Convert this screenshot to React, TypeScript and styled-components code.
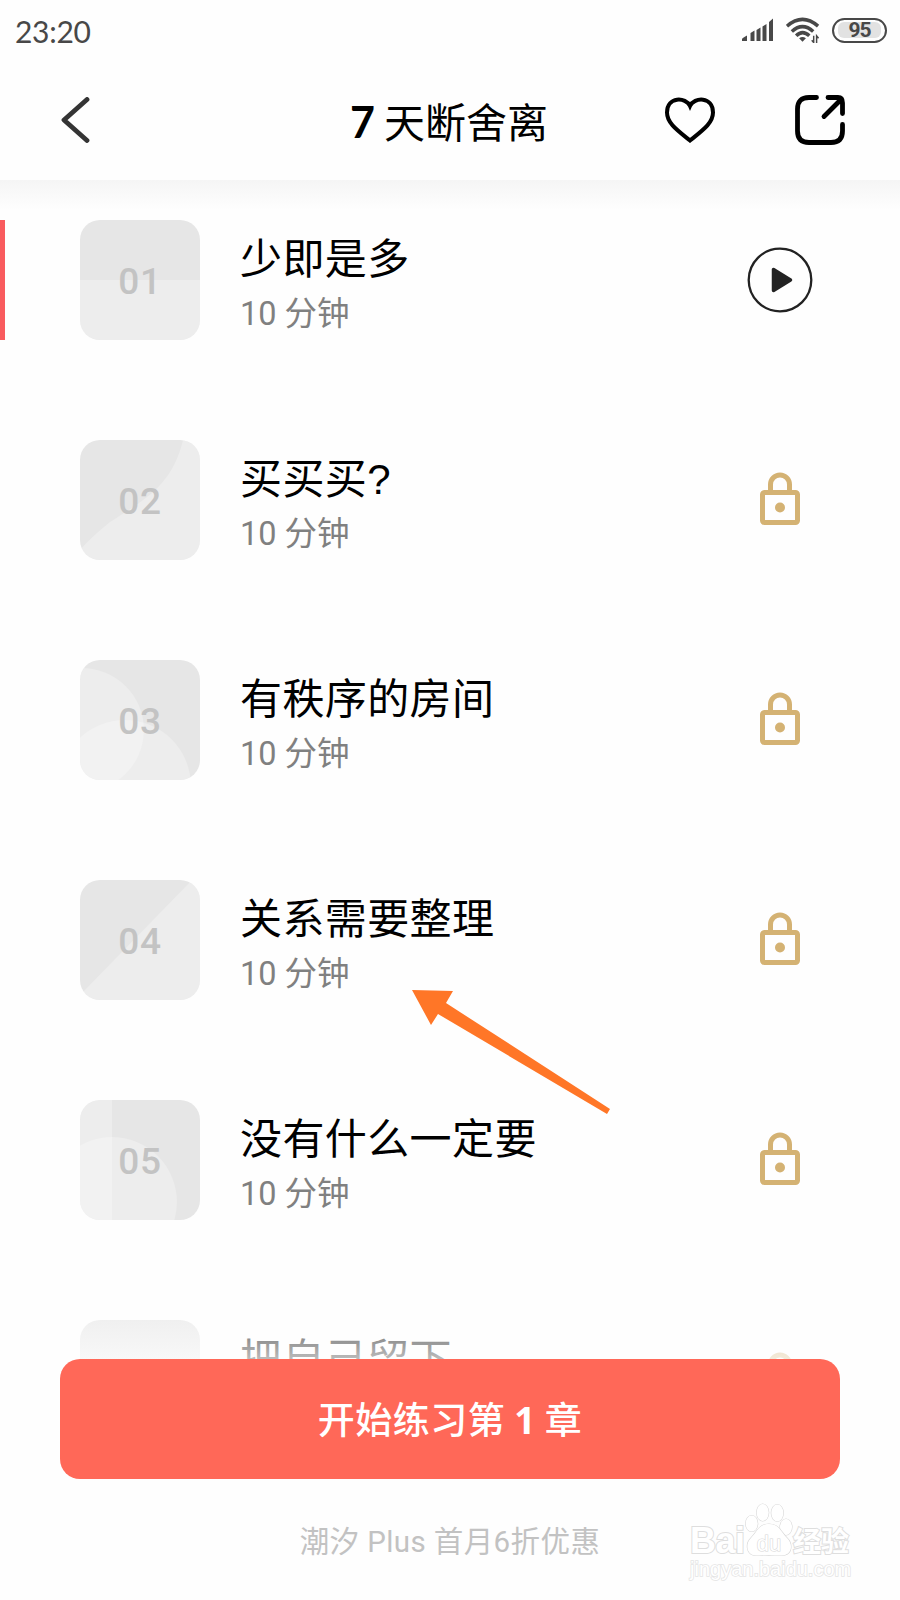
import React from 'react';
import styled, { createGlobalStyle } from 'styled-components';

const GlobalStyle = createGlobalStyle`
  * { box-sizing: border-box; }
  body { margin: 0; background: #fefefe; font-family: Roboto, "Noto Sans CJK SC", sans-serif; }
`;

const Screen = styled.div`
  position: relative;
  width: 900px;
  height: 1600px;
  overflow: hidden;
  background: #fefefe;
`;

const StatusBar = styled.div`
  display: flex;
  align-items: center;
  justify-content: space-between;
  height: 60px;
  padding: 0 13px 0 15px;
  color: #484848;
`;

const Clock = styled.span`
  padding-top: 1px;
  font: 400 30px/36px Lato, sans-serif;
  letter-spacing: -0.3px;
`;

const StatusIcons = styled.div`
  display: flex;
  align-items: center;
  gap: 12px;
`;

const Battery = styled.div`
  display: flex;
  align-items: center;
  justify-content: center;
  width: 55px;
  height: 25px;
  border: 2px solid #484848;
  border-radius: 13px;
  padding: 2px 3px;
`;

const BatteryLevel = styled.span`
  width: 43px;
  height: 16px;
  border-radius: 6px;
  background: #e2e2e2;
  text-align: center;
  font: 700 21px/17px Roboto, sans-serif;
  letter-spacing: -1px;
`;

const Header = styled.header`
  display: grid;
  grid-template-columns: 1fr auto 1fr;
  align-items: center;
  height: 120px;
  padding: 0 55px 0 61px;
`;

const Title = styled.h1`
  margin: 2px 4px 0 -4px;
  display: flex;
  gap: 9px;
  font: 400 41px/60px "Noto Sans CJK SC", sans-serif;
  color: #000;
`;

const TitleNumber = styled.span`
  padding-top: 2px;
  font-family: Lato, sans-serif;
  font-weight: 700;
  font-size: 43px;
`;

const HeaderActions = styled.div`
  display: flex;
  justify-content: flex-end;
  align-items: center;
  gap: 80px;
`;

const Chapters = styled.ul`
  margin: 0;
  padding: 40px 0 0;
  list-style: none;
  display: flex;
  flex-direction: column;
  gap: 100px;
  background: linear-gradient(#f5f5f5, #fefefe 30px);
`;

const Chapter = styled.li<{ $active?: boolean }>`
  display: grid;
  grid-template-columns: 120px 1fr 66px;
  column-gap: 40px;
  height: 120px;
  padding: 0 87px 0 75px;
  border-left: 5px solid ${p => (p.$active ? '#f95b5e' : 'transparent')};
`;

const Tile = styled.div`
  display: grid;
  place-items: center;
  width: 120px;
  height: 120px;
  border-radius: 20px;
  overflow: hidden;
  background: #e6e6e6;
  > * { grid-area: 1 / 1; }
`;

const TileNumber = styled.span`
  z-index: 1;
  padding-top: 3px;
  font: 500 37px/44px Roboto, sans-serif;
  letter-spacing: 0.6px;
  color: #c3c3c3;
`;

const ChapterText = styled.div`
  display: flex;
  flex-direction: column;
  padding-top: 10px;
`;

const ChapterTitle = styled.span`
  height: 60px;
  font: 400 42px/60px "Liberation Sans", "Noto Sans CJK SC", sans-serif;
  letter-spacing: 0.4px;
  color: #000;
  white-space: nowrap;
`;

const Duration = styled.span`
  font: 400 32.500px/48px Roboto, "Noto Sans CJK SC", sans-serif;
  color: #808080;
`;

const ChapterState = styled.div<{ $locked: boolean }>`
  display: flex;
  align-items: center;
  justify-content: center;
  padding-bottom: ${p => (p.$locked ? 3 : 0)}px;
`;

const Footer = styled.footer`
  position: absolute;
  left: 0;
  right: 0;
  bottom: 0;
  height: 290px;
  padding: 49px 60px 0;
  display: flex;
  flex-direction: column;
  align-items: center;
  gap: 39px;
  background: linear-gradient(rgba(254, 254, 254, 0.32), #fefefe 80px);
`;

const StartButton = styled.button`
  width: 780px;
  height: 120px;
  flex: none;
  border: 0;
  padding: 0 0 1px;
  border-radius: 20px;
  background: #ff6858;
  color: #fff;
  font: 500 37px/54px "Noto Sans CJK SC", sans-serif;
  letter-spacing: 0.5px;
`;

const ButtonNumber = styled.b`
  font-family: "Noto Sans", sans-serif;
  font-weight: 700;
`;

const Promo = styled.p`
  margin: 0;
  font: 400 29.500px/48px Roboto, "Noto Sans CJK SC", sans-serif;
  letter-spacing: 0.4px;
  color: #c2c2c2;
`;

const Arrow = styled.svg`
  position: absolute;
  left: 410px;
  top: 988px;
`;

const Watermark = styled.div`
  position: absolute;
  left: 690px;
  top: 1500px;
  width: 165px;
  color: #fff;
  paint-order: stroke fill;
  -webkit-text-stroke: 2px #dedede;
`;

const WatermarkLogo = styled.div`
  display: flex;
  align-items: flex-end;
  height: 60px;
`;

const WatermarkLatin = styled.span`
  width: 54px;
  font: 700 36px/38px "Liberation Sans", sans-serif;
  letter-spacing: -0.5px;
  white-space: nowrap;
`;

const WatermarkHan = styled.span`
  font: 700 28px/40px "Noto Sans CJK SC", sans-serif;
  white-space: nowrap;
`;

const WatermarkUrl = styled.div`
  margin-top: -2px;
  font: 400 20px/22px "Liberation Sans", sans-serif;
  white-space: nowrap;
  -webkit-text-stroke: 1.500px #e4e4e4;
`;

const SignalIcon = () => (
  <svg width="33" height="24" viewBox="0 0 33 24" fill="#484848">
    <path d="M1 23v-2q0-1 5-3.500v5.500zM9.500 23v-8l4-2.500v10.500zM15.500 23V12l4-2.500V23zM21.500 23V8.500l4-2.500v17zM28 23V4l4-3.500V23z" />
  </svg>
);

const WifiIcon = () => (
  <svg width="34" height="28" viewBox="0 0 35 28" fill="none" stroke="#484848" strokeWidth="3.600">
    <path d="M1 10Q17 -4 33 10M6 15.500Q17 5.500 28 15.500M10.500 20Q17 13.500 24 20" />
    <path d="M13.500 22.500q3.500-2.500 7 0L17 26z" fill="#484848" stroke="none" />
    <path d="M28.500 20v7.500M26.500 24.500l2 2.500M31.500 27.500v-7.500l2 2.500" strokeWidth="1.500" />
  </svg>
);

const BackIcon = () => (
  <svg width="29" height="46" viewBox="0 0 29 46" fill="none" stroke="#343434" strokeWidth="4.800" strokeLinecap="round" strokeLinejoin="round">
    <path d="M26 2.500L3 23l23 20.500" />
  </svg>
);

const HeartIcon = () => (
  <svg width="50" height="46" viewBox="0 0 50 46" fill="none" stroke="#000" strokeWidth="4">
    <path d="M25 9C21 0 2 -1 2 15.500C2 26 12 33 25 43.500C38 33 48 26 48 15.500C48 -1 29 0 25 9Z" />
  </svg>
);

const ShareIcon = () => (
  <svg width="50" height="50" viewBox="0 0 50 50" fill="none" stroke="#000" strokeWidth="4.800" strokeLinecap="round">
    <path d="M21.500 2.500H14Q2.500 2.500 2.500 14V36Q2.500 47.500 14 47.500H36Q47.500 47.500 47.500 36V29.500M33 2.500H43Q47.500 2.500 47.500 8V18.500M29 21.500L46 4.500" />
  </svg>
);

const PlayIcon = () => (
  <svg width="66" height="66" viewBox="0 0 66 66">
    <circle cx="33" cy="33" r="31.300" fill="none" stroke="#222" strokeWidth="2.300" />
    <path d="M26.500 22.500v21l17-10.500z" fill="#222" stroke="#222" strokeWidth="3.500" strokeLinejoin="round" />
  </svg>
);

const LockIcon = () => (
  <svg width="40" height="53" viewBox="0 0 40 53" fill="none" stroke="#d4b273" strokeWidth="5">
    <rect x="2.500" y="20.500" width="35" height="30" rx="2" />
    <path d="M10.500 20V12.500a9.500 9.500 0 0 1 19 0V20" />
    <circle cx="20" cy="35.500" r="5" fill="#d4b273" stroke="none" />
  </svg>
);

const patterns: React.ReactNode[] = [
  <path d="M0 60h120v60H0z" />,
  <path d="M0 110Q10 98 30 82C64 60 92 46 103 0H120V120H0z" />,
  <><circle cx="2" cy="70" r="62" /><circle cx="45" cy="126" r="66" /></>,
  <path d="M0 115L112 0H120V120H0z" />,
  <><path d="M0 0h32v120H0z" /><circle cx="32" cy="102" r="65" /></>,
  null,
];

const chapters = ['少即是多', '买买买?', '有秩序的房间', '关系需要整理', '没有什么一定要', '把自己留下'];

export default function App() {
  return (
    <Screen>
      <GlobalStyle />
      <StatusBar>
        <Clock>23:20</Clock>
        <StatusIcons>
          <SignalIcon />
          <WifiIcon />
          <Battery><BatteryLevel>95</BatteryLevel></Battery>
        </StatusIcons>
      </StatusBar>
      <Header>
        <BackIcon />
        <Title><TitleNumber>7</TitleNumber>天断舍离</Title>
        <HeaderActions><HeartIcon /><ShareIcon /></HeaderActions>
      </Header>
      <Chapters>
        {chapters.map((name, i) => (
          <Chapter key={name} $active={i === 0}>
            <Tile>
              <svg width="120" height="120" fill="rgba(255,255,255,0.27)">{patterns[i]}</svg>
              {i < 5 && <TileNumber>0{i + 1}</TileNumber>}
            </Tile>
            <ChapterText>
              <ChapterTitle>{name}</ChapterTitle>
              {i < 5 && <Duration>10 分钟</Duration>}
            </ChapterText>
            <ChapterState $locked={i > 0}>{i === 0 ? <PlayIcon /> : <LockIcon />}</ChapterState>
          </Chapter>
        ))}
      </Chapters>
      <Footer>
        <StartButton>开始练习第 <ButtonNumber>1</ButtonNumber> 章</StartButton>
        <Promo>潮汐 Plus 首月6折优惠</Promo>
      </Footer>
      <Arrow width="202" height="130" viewBox="0 0 202 130" fill="#ff7627">
        <path d="M2 2L43 3L36 15L200 121L197 126L28 26L21 37Z" />
      </Arrow>
      <Watermark>
        <WatermarkLogo>
          <WatermarkLatin>Bai</WatermarkLatin>
          <svg width="49" height="58" viewBox="0 0 49 58" fill="#fff" stroke="#d8d8d8" strokeWidth="1.200">
            <ellipse cx="7.700" cy="21.500" rx="6" ry="8" />
            <ellipse cx="18.700" cy="10.500" rx="6" ry="8.500" />
            <ellipse cx="33.300" cy="11" rx="6" ry="8.500" />
            <ellipse cx="42" cy="25" rx="6" ry="8" />
            <path d="M25 22C15 22 13 30 7 36C1 42 3 51 9 53Q14 54 25 53Q36 54 41 53C48 51 49 42 43 36C37 30 35 22 25 22Z" />
            <text x="25" y="49" textAnchor="middle" fontFamily="Liberation Sans, sans-serif" fontSize="22" style={{ WebkitTextStroke: '1.500px #d4d4d4' }}>du</text>
          </svg>
          <WatermarkHan>经验</WatermarkHan>
        </WatermarkLogo>
        <WatermarkUrl>jingyan.baidu.com</WatermarkUrl>
      </Watermark>
    </Screen>
  );
}
